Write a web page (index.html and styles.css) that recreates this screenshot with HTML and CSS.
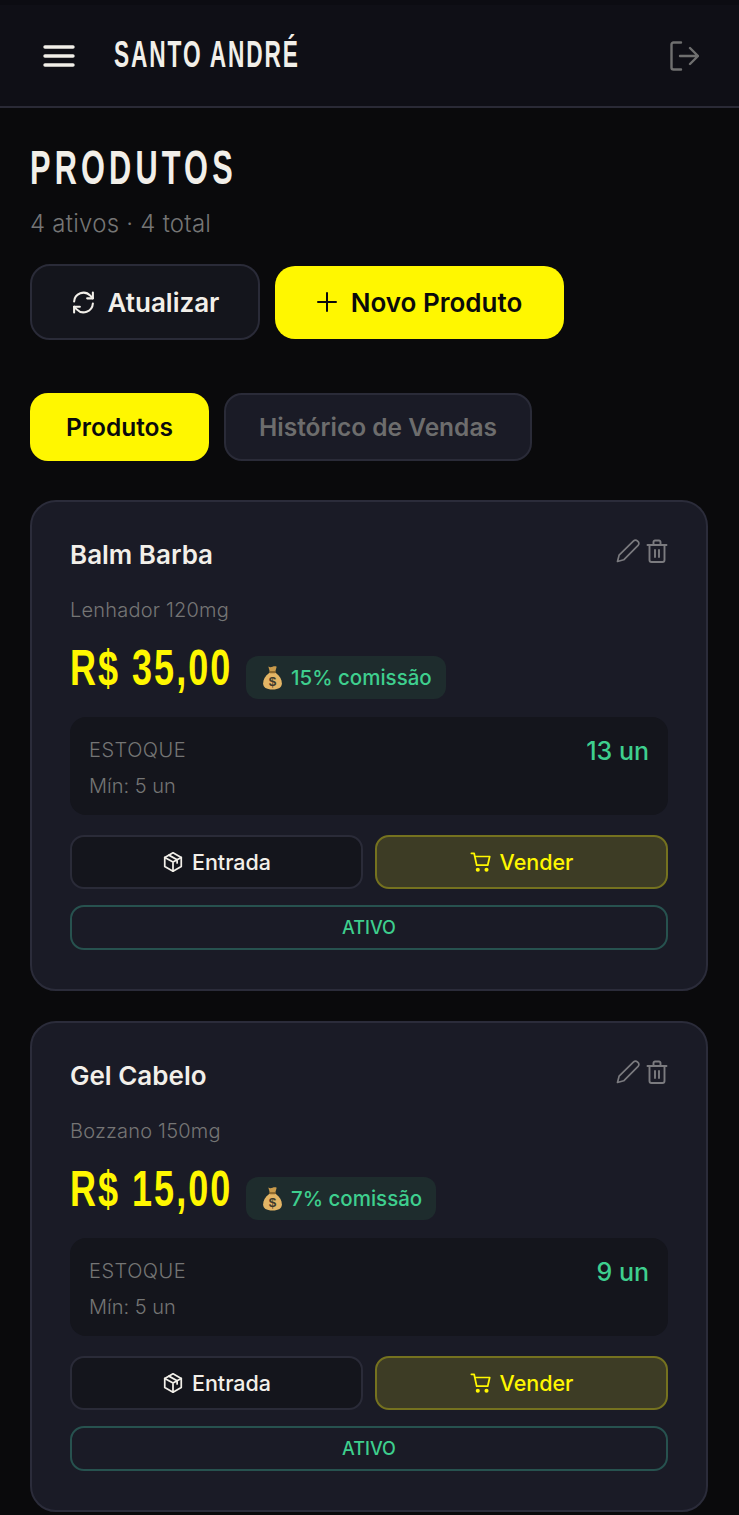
FILE: index.html

```html
<!DOCTYPE html>
<html lang="pt-BR">
<head>
  <meta charset="UTF-8">
  <meta name="viewport" content="width=device-width, initial-scale=1.0">
  <title>Produtos - Santo André</title>
  <link rel="stylesheet" href="styles.css">
</head>
<body>
  <header class="topbar">
    <div class="topbar-left">
      <svg class="menu-icon" viewBox="0 0 32 24" fill="none" stroke="#f2efe9" stroke-width="3.4" stroke-linecap="round">
        <path d="M2 3h28M2 12h28M2 21h28"/>
      </svg>
      <div class="brand"><span class="condensed brand-text">SANTO ANDRÉ</span></div>
    </div>
    <svg class="logout-icon" viewBox="0 0 30 30" fill="none" stroke="#6f6f6f" stroke-width="2.4" stroke-linecap="round" stroke-linejoin="round">
      <path d="M12 1.5H4.5a2 2 0 0 0-2 2v23a2 2 0 0 0 2 2H12"/>
      <path d="M11 15h18M21 7l8 8-8 8"/>
    </svg>
  </header>

  <main class="content">
    <h1 class="page-title"><span class="condensed title-text">PRODUTOS</span></h1>
    <p class="page-sub">4 ativos · 4 total</p>

    <div class="actions">
      <button class="btn btn-refresh">
        <svg class="ic-refresh" viewBox="0 0 24 24" fill="none" stroke="currentColor" stroke-width="2" stroke-linecap="round" stroke-linejoin="round">
          <path d="M3 11a9 9 0 0 1 15.5-5.6L21 8"/>
          <path d="M21 2.5V8h-5.5"/>
          <path d="M21 13a9 9 0 0 1-15.5 5.6L3 16"/>
          <path d="M3 21.5V16h5.5"/>
        </svg>
        Atualizar
      </button>
      <button class="btn btn-new">
        <svg class="ic-plus" viewBox="0 0 20 20" fill="none" stroke="currentColor" stroke-width="2" stroke-linecap="round">
          <path d="M10 1v18M1 10h18"/>
        </svg>
        Novo Produto
      </button>
    </div>

    <div class="tabs">
      <button class="tab tab-active">Produtos</button>
      <button class="tab">Histórico de Vendas</button>
    </div>

    <section class="card">
      <div class="card-head">
        <h2 class="card-title">Balm Barba</h2>
        <div class="card-tools">
          <svg class="ic-tool" viewBox="0 0 24 24" fill="none" stroke="#7b7b7f" stroke-width="1.7" stroke-linecap="round" stroke-linejoin="round">
            <path d="M1.5 22.5l1.6-6.4L17.6 1.9a2.6 2.6 0 0 1 3.7 0l.8.8a2.6 2.6 0 0 1 0 3.7L7.7 20.8z"/>
          </svg>
          <svg class="ic-tool" viewBox="0 0 24 24" fill="none" stroke="#7b7b7f" stroke-width="1.9" stroke-linecap="round" stroke-linejoin="round">
            <path d="M2.5 6h19M8.5 6V3A1.5 1.5 0 0 1 10 1.5h4A1.5 1.5 0 0 1 15.5 3v3"/>
            <path d="M4.5 6v15a2 2 0 0 0 2 2h11a2 2 0 0 0 2-2V6"/>
            <path d="M10 11v7M14 11v7"/>
          </svg>
        </div>
      </div>
      <p class="card-sub">Lenhador 120mg</p>
      <div class="price-row">
        <div class="price"><span class="condensed price-text">R$ 35,00</span></div>
        <span class="badge">
          <svg class="ic-bag" viewBox="0 0 20 24">
            <path d="M6 1.5c1.5.8 2.5.8 4 .2 1.5-.6 3-.6 4 0L12.500 7h-5z" fill="#c99a4b"/>
            <path d="M7 7.5C3 10.5 1 14 1 17.5 1 21.500 4 23.500 10 23.500s9-2 9-6c0-3.500-2-7-6-10z" fill="#e3b565"/>
            <rect x="6.8" y="5.8" width="6.4" height="2" rx="1" fill="#8f6a2e"/>
            <text x="10" y="20.5" class="bag-sign">$</text>
          </svg>
          15% comissão
        </span>
      </div>
      <div class="stock">
        <div class="stock-col">
          <span class="stock-label">ESTOQUE</span>
          <span class="stock-min">Mín: 5 un</span>
        </div>
        <span class="stock-qty">13 un</span>
      </div>
      <div class="card-btns">
        <button class="mini-btn mini-in">
          <svg class="ic-mini" viewBox="0 0 24 24" fill="none" stroke="currentColor" stroke-width="1.9" stroke-linecap="round" stroke-linejoin="round">
            <path d="M12 2l9 5v10l-9 5-9-5V7z"/>
            <path d="M3 7l9 5 9-5M12 12v10M7.5 4.5l9 5V13"/>
          </svg>
          Entrada
        </button>
        <button class="mini-btn mini-sell">
          <svg class="ic-mini" viewBox="0 0 24 24" fill="none" stroke="currentColor" stroke-width="1.9" stroke-linecap="round" stroke-linejoin="round">
            <path d="M1.5 2.5h3l2.8 13h12L21.5 6H5.2"/>
            <circle cx="8.5" cy="20.5" r="1.3" fill="currentColor"/>
            <circle cx="18" cy="20.5" r="1.3" fill="currentColor"/>
          </svg>
          Vender
        </button>
      </div>
      <button class="status">ATIVO</button>
    </section>

    <section class="card">
      <div class="card-head">
        <h2 class="card-title">Gel Cabelo</h2>
        <div class="card-tools">
          <svg class="ic-tool" viewBox="0 0 24 24" fill="none" stroke="#7b7b7f" stroke-width="1.7" stroke-linecap="round" stroke-linejoin="round">
            <path d="M1.5 22.5l1.6-6.4L17.6 1.9a2.6 2.6 0 0 1 3.7 0l.8.8a2.6 2.6 0 0 1 0 3.7L7.7 20.8z"/>
          </svg>
          <svg class="ic-tool" viewBox="0 0 24 24" fill="none" stroke="#7b7b7f" stroke-width="1.9" stroke-linecap="round" stroke-linejoin="round">
            <path d="M2.5 6h19M8.5 6V3A1.5 1.5 0 0 1 10 1.5h4A1.5 1.5 0 0 1 15.5 3v3"/>
            <path d="M4.5 6v15a2 2 0 0 0 2 2h11a2 2 0 0 0 2-2V6"/>
            <path d="M10 11v7M14 11v7"/>
          </svg>
        </div>
      </div>
      <p class="card-sub">Bozzano 150mg</p>
      <div class="price-row">
        <div class="price"><span class="condensed price-text">R$ 15,00</span></div>
        <span class="badge">
          <svg class="ic-bag" viewBox="0 0 20 24">
            <path d="M6 1.5c1.5.8 2.5.8 4 .2 1.5-.6 3-.6 4 0L12.500 7h-5z" fill="#c99a4b"/>
            <path d="M7 7.5C3 10.5 1 14 1 17.5 1 21.500 4 23.500 10 23.500s9-2 9-6c0-3.500-2-7-6-10z" fill="#e3b565"/>
            <rect x="6.8" y="5.8" width="6.4" height="2" rx="1" fill="#8f6a2e"/>
            <text x="10" y="20.5" class="bag-sign">$</text>
          </svg>
          7% comissão
        </span>
      </div>
      <div class="stock">
        <div class="stock-col">
          <span class="stock-label">ESTOQUE</span>
          <span class="stock-min">Mín: 5 un</span>
        </div>
        <span class="stock-qty">9 un</span>
      </div>
      <div class="card-btns">
        <button class="mini-btn mini-in">
          <svg class="ic-mini" viewBox="0 0 24 24" fill="none" stroke="currentColor" stroke-width="1.9" stroke-linecap="round" stroke-linejoin="round">
            <path d="M12 2l9 5v10l-9 5-9-5V7z"/>
            <path d="M3 7l9 5 9-5M12 12v10M7.5 4.5l9 5V13"/>
          </svg>
          Entrada
        </button>
        <button class="mini-btn mini-sell">
          <svg class="ic-mini" viewBox="0 0 24 24" fill="none" stroke="currentColor" stroke-width="1.9" stroke-linecap="round" stroke-linejoin="round">
            <path d="M1.5 2.5h3l2.8 13h12L21.5 6H5.2"/>
            <circle cx="8.5" cy="20.5" r="1.3" fill="currentColor"/>
            <circle cx="18" cy="20.5" r="1.3" fill="currentColor"/>
          </svg>
          Vender
        </button>
      </div>
      <button class="status">ATIVO</button>
    </section>
  </main>
</body>
</html>
```

FILE: styles.css

```css
* {
  box-sizing: border-box;
}
html, body {
  height: 1515px;
  overflow: hidden;
}
body {
  margin: 0;
  background: #0a0a0c;
  color: #f2efe9;
  font-family: Inter, 'Open Sans', sans-serif;
}
button {
  font-family: inherit;
  cursor: pointer;
}
/* no condensed display face is installed, so the bold sans gets squeezed */
.condensed {
  display: inline-block;
  font-family: 'Liberation Sans', sans-serif;
  font-weight: 700;
  white-space: nowrap;
  transform-origin: left center;
}
.topbar {
  height: 108px;
  padding: 0 40px 0 43px;
  display: flex;
  justify-content: space-between;
  align-items: center;
  background: #0f0f16;
  border-top: 5px solid #0c0c12;
  border-bottom: 2px solid #2a2a36;
}
.topbar-left {
  display: flex;
  align-items: center;
  gap: 39px;
}
.menu-icon {
  width: 32px;
  height: 24px;
}
.brand {
  width: 186px;
  line-height: 40px;
  margin-top: 4px;
}
.brand-text {
  font-size: 36px;
  letter-spacing: 3px;
  transform: scaleX(0.63);
}
.logout-icon {
  width: 30px;
  height: 30px;
}
.content {
  padding: 0 31px 0 30px;
}
.page-title {
  font-size: 48px;
  line-height: 52px;
  margin: 33px 0 0;
}
.title-text {
  letter-spacing: 6.5px;
  transform: scaleX(0.64);
}
.page-sub {
  margin: 14px 0 0;
  font-size: 24px;
  font-weight: 300;
  letter-spacing: 0.25px;
  line-height: 32px;
  color: #757575;
}
.actions {
  display: flex;
  align-items: center;
  gap: 15px;
  margin-top: 24px;
}
.btn {
  display: flex;
  align-items: center;
  justify-content: center;
  font-size: 26px;
  font-weight: 600;
}
.btn-refresh {
  width: 230px;
  height: 76px;
  gap: 12px;
  background: #14151c;
  color: #f2efe9;
  border: 2px solid #2a2b38;
  border-radius: 20px;
}
.ic-refresh {
  width: 25px;
  height: 25px;
}
.btn-new {
  width: 289px;
  height: 73px;
  gap: 14px;
  background: #fff700;
  color: #0a0a0c;
  border: 0;
  border-radius: 20px;
}
.ic-plus {
  width: 20px;
  height: 20px;
}
.tabs {
  display: flex;
  gap: 15px;
  margin-top: 53px;
}
.tab {
  width: 308px;
  height: 68px;
  padding: 0;
  font-size: 24.5px;
  font-weight: 600;
  background: #1a1b26;
  color: #6d6d6d;
  border: 2px solid #2a2b38;
  border-radius: 18px;
}
.tab-active {
  width: 179px;
  background: #fff700;
  color: #0a0a0c;
  border: 0;
}
.card {
  height: 491px;
  margin-top: 39px;
  padding: 36px 38px 0;
  background: #1a1b26;
  border: 2px solid #2b2c3a;
  border-radius: 26px;
}
.card + .card {
  margin-top: 30px;
}
.card-head {
  display: flex;
  justify-content: space-between;
  align-items: flex-start;
}
.card-title {
  margin: 0;
  font-size: 26px;
  font-weight: 600;
  line-height: 34px;
  color: #f2efe9;
}
.card-tools {
  display: flex;
  gap: 5px;
  margin: 1px -1px 0 0;
}
.ic-tool {
  width: 24px;
  height: 24px;
}
.card-sub {
  margin: 25px 0 0;
  font-size: 20px;
  font-weight: 300;
  letter-spacing: 0.2px;
  line-height: 26px;
  color: #757575;
}
.price-row {
  display: flex;
  align-items: center;
  gap: 16px;
  margin-top: 13px;
}
.price {
  width: 160px;
  height: 58px;
  line-height: 58px;
}
.price-text {
  font-size: 50px;
  letter-spacing: 2.8px;
  color: #fff700;
  transform: scaleX(0.72);
}
.badge {
  display: flex;
  align-items: center;
  gap: 8px;
  height: 43px;
  padding: 0 14px 0 16px;
  margin-top: 20px;
  background: #1e2c2d;
  color: #3ecf8e;
  font-size: 20.5px;
  font-weight: 500;
  border-radius: 12px;
}
.ic-bag {
  width: 21px;
  height: 25px;
}
.bag-sign {
  font-family: 'Liberation Sans', sans-serif;
  font-size: 13px;
  font-weight: 700;
  text-anchor: middle;
  fill: #3d3a2c;
}
.stock {
  display: flex;
  justify-content: space-between;
  align-items: flex-start;
  height: 98px;
  margin-top: 18px;
  padding: 20px 19px;
  background: #14151c;
  border-radius: 16px;
}
.stock-col {
  display: flex;
  flex-direction: column;
  gap: 10px;
}
.stock-label, .stock-min {
  font-size: 20px;
  font-weight: 300;
  line-height: 26px;
  color: #757575;
}
.stock-label {
  letter-spacing: 0.5px;
}
.stock-qty {
  font-size: 25px;
  font-weight: 500;
  line-height: 28px;
  color: #3ecf8e;
}
.card-btns {
  display: flex;
  gap: 12px;
  margin-top: 20px;
}
.mini-btn {
  flex: 1;
  display: flex;
  align-items: center;
  justify-content: center;
  gap: 8px;
  height: 54px;
  font-size: 21.5px;
  font-weight: 500;
  border-radius: 14px;
}
.mini-in {
  background: #14151c;
  color: #f2efe9;
  border: 2px solid #2a2b38;
}
.mini-sell {
  background: #3d3c25;
  color: #fff700;
  border: 2px solid #75721f;
}
.ic-mini {
  width: 22px;
  height: 22px;
}
.status {
  display: block;
  width: 100%;
  height: 45px;
  margin-top: 16px;
  background: transparent;
  color: #3ecf8e;
  font-size: 18px;
  font-weight: 500;
  border: 2px solid #27524f;
  border-radius: 14px;
}
```
